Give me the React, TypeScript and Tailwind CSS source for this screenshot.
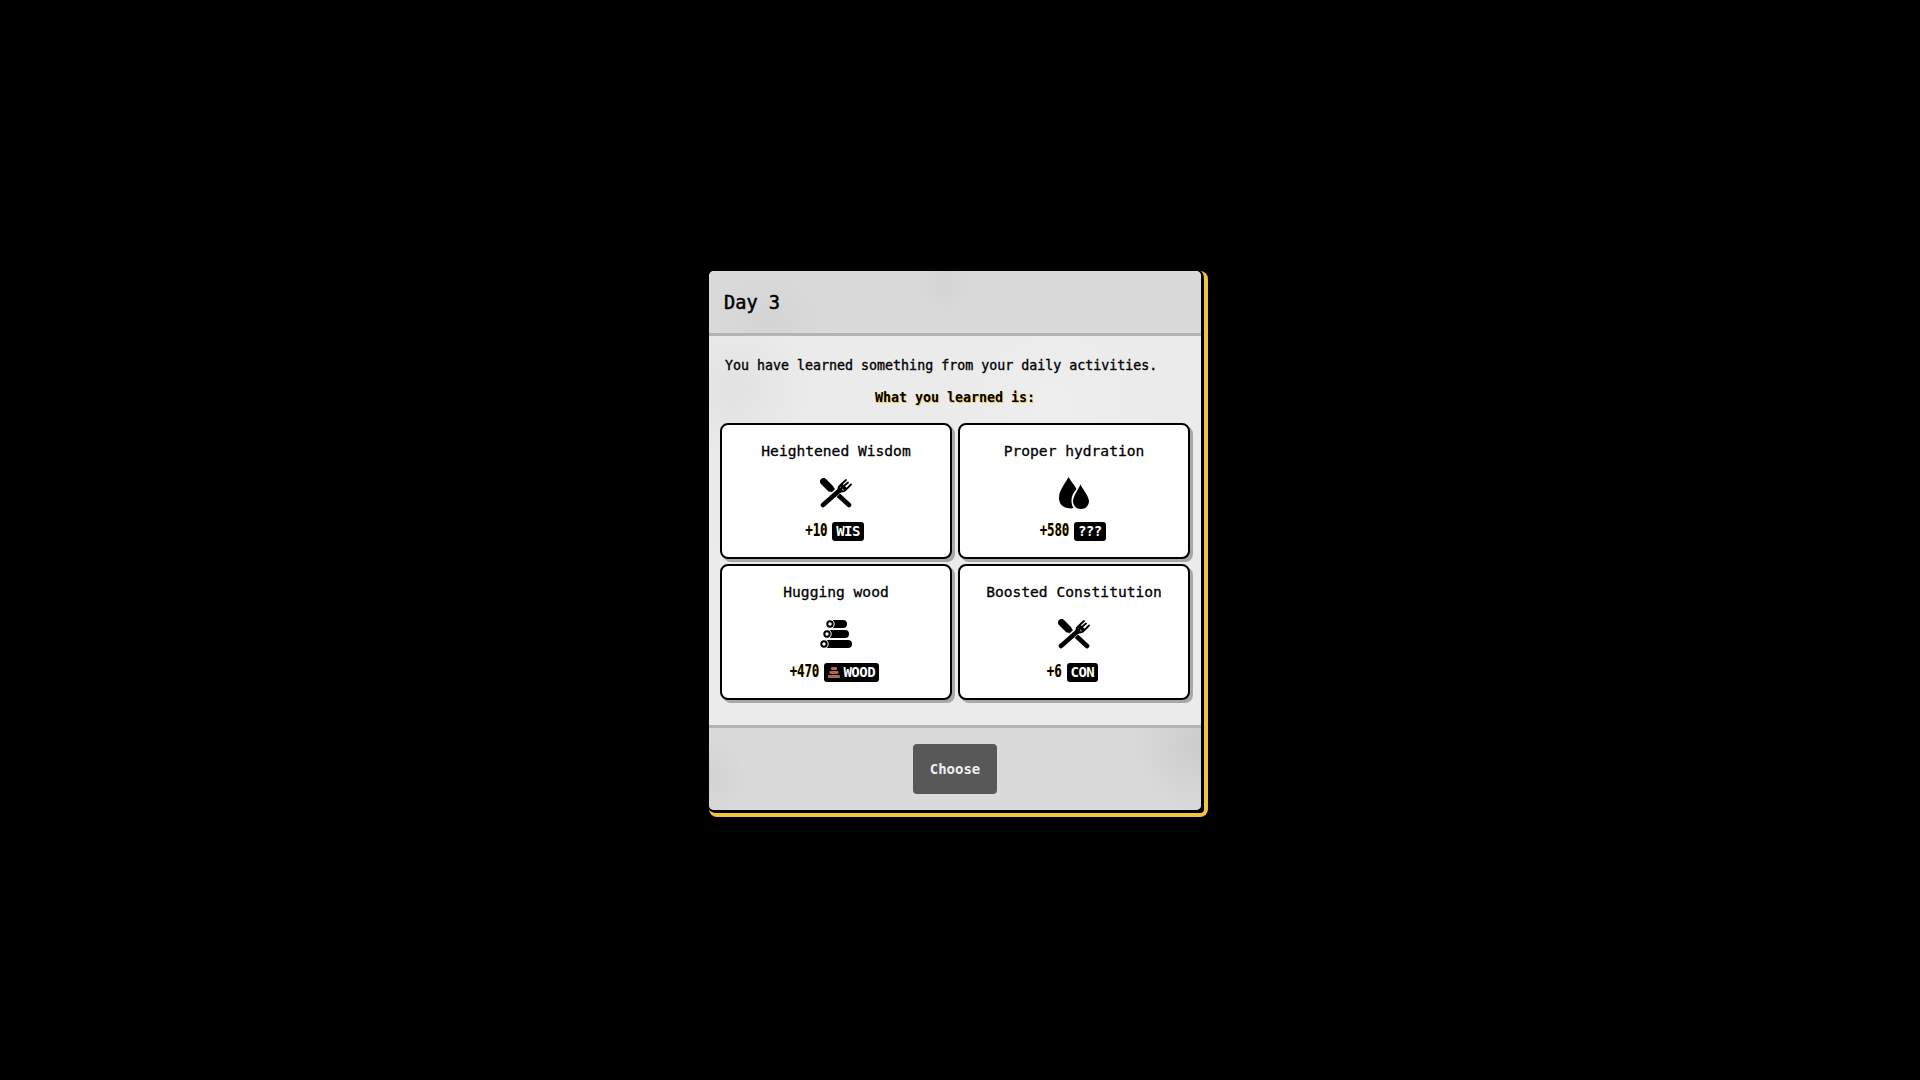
import React from 'react';

const mono = 'font-["DejaVu_Sans_Mono","Liberation_Mono",monospace]';

function Cutlery() {
  return (
    <svg viewBox="0 0 32 30" className="w-8 h-[30px]" fill="none" stroke="black" strokeLinecap="round">
      <path d="M3.5 3.5 L10 10" strokeWidth="7" />
      <path d="M10 9.5 L29 27" strokeWidth="4.6" />
      <path d="M19 12 L3 27" strokeWidth="6.6" stroke="white" strokeLinecap="butt" />
      <path d="M20 12 L3 27" strokeWidth="4.6" />
      <path d="M18.5 12.5 Q18 9 20 7.5 L26 2 M21 10.5 L28 4.5 M23 13.5 Q25 13 26 11.5 L31 6.5" strokeWidth="1.8" />
      <path d="M19 8.5 L24 13.5 L20 15 L17.5 12.5 Z M19.5 8 L22 5.5 L27.5 10.5 L25 13 Z" fill="black" stroke="none" />
    </svg>
  );
}

function Drops() {
  return (
    <svg viewBox="0 0 30 32" className="w-[30px] h-8 shrink-0" fill="black">
      <path d="M9.5 0 C12 4.5 15.5 8 17.5 12 C13 17 10.5 24 14.5 31 C12.5 31.5 11 31.5 9 31 C3.5 30.5 0 26.5 0 21 C0 13 6 7 9.5 0 Z" />
      <path d="M21.5 7.5 C23.5 12 29.5 18.5 30 24 C30 28.5 26.5 32 22 32 C17.5 32 14 28.5 14 24 C14.5 18.5 19.5 12 21.5 7.5 Z" />
    </svg>
  );
}

function Logs() {
  const row = (cx: number, cy: number, end: number) => (
    <g key={cy}>
      <rect x={cx} y={cy - 4} width={end - cx} height="8" rx="4" fill="black" />
      <circle cx={cx} cy={cy} r="4.7" fill="white" />
      <circle cx={cx} cy={cy} r="2.7" fill="white" stroke="black" strokeWidth="2" />
    </g>
  );
  return (
    <svg viewBox="0 0 32 28" className="w-8 h-[28px]">
      {row(10, 4, 27)}
      {row(7, 14, 29)}
      {row(4, 24, 32)}
    </svg>
  );
}

function WoodMini() {
  return (
    <svg viewBox="0 0 12 11" className="w-[12px] h-[11px]" fill="#b0655a">
      <rect x="3" y="0" width="6" height="3" rx="1" />
      <rect x="1.5" y="4" width="9" height="3" rx="1" />
      <rect x="0" y="8" width="12" height="3" rx="1" />
    </svg>
  );
}

function Card({ title, icon, amount, tag, mini }: { title: string; icon: React.ReactNode; amount: string; tag: string; mini?: boolean }) {
  return (
    <div className="h-[136px] rounded-[8px] border-2 border-black bg-white shadow-[3px_3px_0_#a8a8a8] flex flex-col items-center pt-[16px]">
      <div className="text-[14.6px] leading-[20px] text-black [-webkit-text-stroke:0.3px_black]">{title}</div>
      <div className="mt-[17px] h-[30px] flex items-center">{icon}</div>
      <div className="mt-[13px] pr-[3px] flex items-center gap-[5px] h-[20px]">
        <span className="flex justify-center" style={{ width: amount.length * 7.4 }}>
          <span className="shrink-0 whitespace-nowrap scale-x-[0.72] text-[17px] font-bold text-black [text-shadow:1px_0_0_#f0c33c]">{amount}</span>
        </span>
        <span className="h-[19px] rounded-[3px] bg-black px-[4px] flex items-center gap-[3px] text-[14px] font-bold tracking-[-0.5px] text-white">
          {mini && <WoodMini />}
          {tag}
        </span>
      </div>
    </div>
  );
}

export default function App() {
  return (
    <div className={`min-h-screen w-full bg-black flex items-center justify-center pr-[3px] pt-[8px] ${mono}`}>
      <div className="rounded-[8px] border-r-4 border-b-4 border-[#f2c43d] pr-[3px] pb-[3px]">
        <div className="w-[492px] h-[539px] flex flex-col rounded-[5px] overflow-hidden bg-[#ebebeb] bg-[radial-gradient(circle_at_5%_22%,#e2e2e2_0,transparent_12%),radial-gradient(circle_at_12%_42%,#e6e6e6_0,transparent_14%),radial-gradient(circle_at_70%_25%,#eeeeee_0,transparent_20%)]">
          <div className="h-[65px] shrink-0 border-b-[3px] border-[#b4b4b4] bg-[#dadada] bg-[radial-gradient(circle_at_48%_20%,#d4d4d4_0,transparent_12%),radial-gradient(circle_at_12%_90%,#d4d4d4_0,transparent_14%)] pl-[15px] pt-[2px] flex items-center">
            <span className="text-[18.6px] text-black [-webkit-text-stroke:0.5px_black]">Day 3</span>
          </div>
          <div className="flex-1 px-[11px] pt-[21px]">
            <p className="text-[13.3px] leading-[18px] text-black pl-[5px] [-webkit-text-stroke:0.35px_black]">You have learned something from your daily activities.</p>
            <p className="mt-[14px] text-[13.3px] leading-[18px] font-bold text-black text-center [text-shadow:1px_1px_0_#f0c33c]">What you learned is:</p>
            <div className="mt-[16px] grid grid-cols-2 gap-x-[6px] gap-y-[5px]">
              <Card title="Heightened Wisdom" icon={<Cutlery />} amount="+10" tag="WIS" />
              <Card title="Proper hydration" icon={<Drops />} amount="+580" tag="???" />
              <Card title="Hugging wood" icon={<Logs />} amount="+470" tag="WOOD" mini />
              <Card title="Boosted Constitution" icon={<Cutlery />} amount="+6" tag="CON" />
            </div>
          </div>
          <div className="h-[85px] shrink-0 border-t-[3px] border-[#b4b4b4] bg-[#dadada] bg-[radial-gradient(circle_at_100%_20%,#cccccc_0,transparent_14%),radial-gradient(circle_at_0%_60%,#d2d2d2_0,transparent_8%)] flex items-center justify-center">
            <button className="w-[84px] h-[50px] pt-[1px] rounded-[4px] bg-[#585858] text-[14px] font-bold text-[#eeeeee]">Choose</button>
          </div>
        </div>
      </div>
    </div>
  );
}
